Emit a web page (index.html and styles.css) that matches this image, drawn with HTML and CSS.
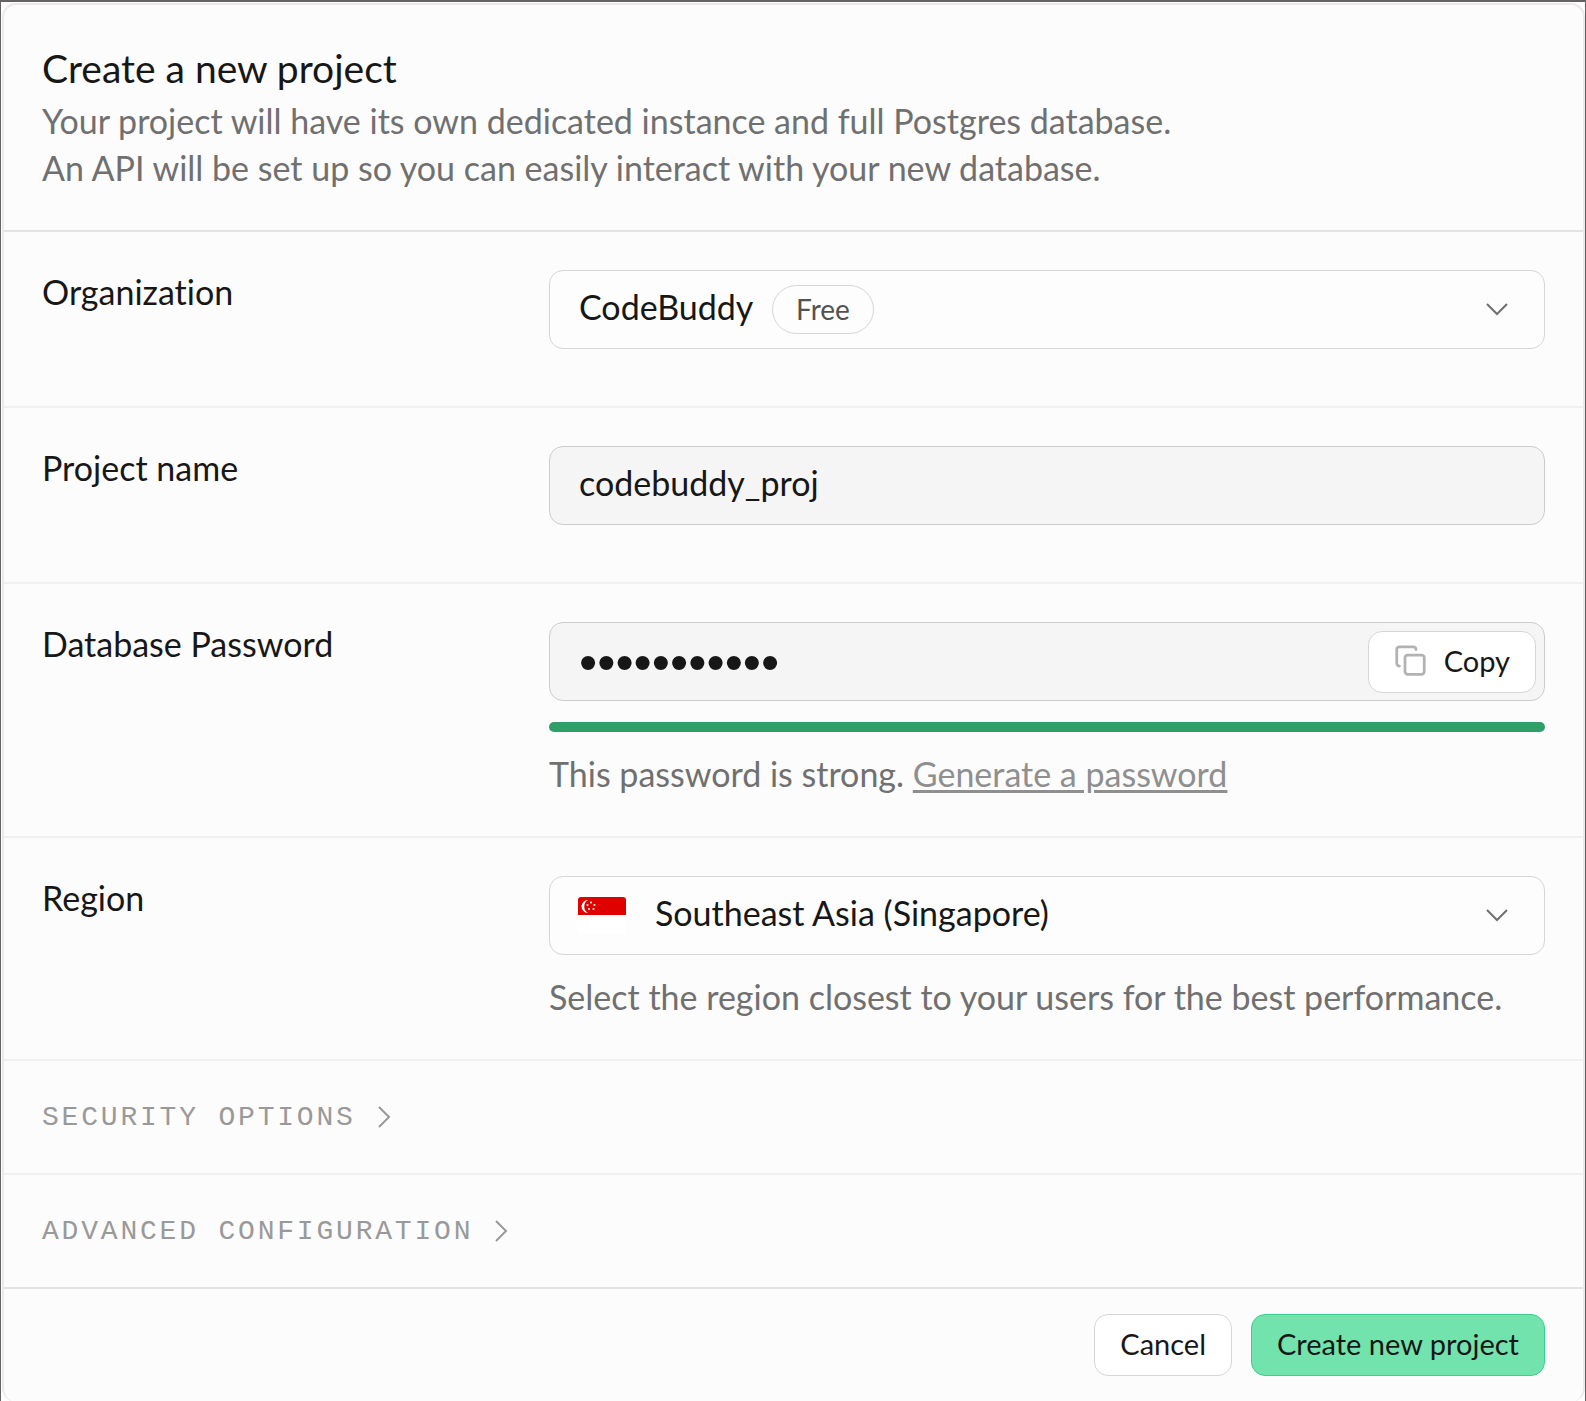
FILE: index.html
```html
<!DOCTYPE html>
<html lang="en">
<head>
    <meta charset="UTF-8">
    <meta name="viewport" content="width=device-width, initial-scale=1.0">
    <title>Create a new project</title>
    <link rel="stylesheet" href="styles.css">
</head>
<body>
    <main class="page">
        <form class="card">
            <header class="card-header">
                <h1>Create a new project</h1>
                <p>Your project will have its own dedicated instance and full Postgres database.<br>An API will be set up so you can easily interact with your new database.</p>
            </header>

            <div class="row row-single">
                <label for="organization">Organization</label>
                <div class="field">
                    <div class="select-wrap">
                        <select class="control" id="organization">
                            <option>CodeBuddy</option>
                        </select>
                        <span class="badge">Free</span>
                        <svg class="chevron" viewBox="0 0 24 24"><path d="M2 7l10 10L22 7"/></svg>
                    </div>
                </div>
            </div>

            <div class="row row-single">
                <label for="project-name">Project name</label>
                <div class="field">
                    <input class="control filled" type="text" id="project-name" value="codebuddy_proj">
                </div>
            </div>

            <div class="row">
                <label for="db-password">Database Password</label>
                <div class="field">
                    <div class="control filled password-box">
                        <input type="password" id="db-password" value="codebuddy12">
                        <button type="button" class="btn copy-btn">
                            <svg class="copy-icon" viewBox="0 0 24 24"><rect x="8" y="8" width="14" height="14" rx="2"/><path d="M4 16c-1.100 0-2-.9-2-2V4c0-1.100.9-2 2-2h10c1.100 0 2 .9 2 2"/></svg>
                            Copy
                        </button>
                    </div>
                    <div class="strength"></div>
                    <p class="hint">This password is strong. <a href="#">Generate a password</a></p>
                </div>
            </div>

            <div class="row">
                <label for="region">Region</label>
                <div class="field">
                    <div class="select-wrap">
                        <select class="control with-flag" id="region">
                            <option>Southeast Asia (Singapore)</option>
                        </select>
                        <svg class="flag" viewBox="0 0 48 36">
                            <rect width="48" height="36" rx="3" fill="#fff"/>
                            <path d="M0 18V3a3 3 0 0 1 3-3h42a3 3 0 0 1 3 3v15z" fill="#df0000"/>
                            <path d="M10 3a6.500 6.500 0 1 0 0 13a7.500 7.500 0 0 1 0-13z" fill="#fff"/>
                            <g fill="#fff">
                                <circle cx="13" cy="5.500" r="1"/>
                                <circle cx="9.500" cy="8" r="1"/>
                                <circle cx="16.500" cy="8" r="1"/>
                                <circle cx="11" cy="12" r="1"/>
                                <circle cx="15.500" cy="12" r="1"/>
                            </g>
                        </svg>
                        <svg class="chevron" viewBox="0 0 24 24"><path d="M2 7l10 10L22 7"/></svg>
                    </div>
                    <p class="hint">Select the region closest to your users for the best performance.</p>
                </div>
            </div>

            <button type="button" class="toggle">
                Security options
                <svg viewBox="0 0 24 24"><path d="M7 2l10 10L7 22"/></svg>
            </button>
            <button type="button" class="toggle">
                Advanced Configuration
                <svg viewBox="0 0 24 24"><path d="M7 2l10 10L7 22"/></svg>
            </button>

            <footer class="card-footer">
                <button type="button" class="btn">Cancel</button>
                <button type="submit" class="btn btn-primary">Create new project</button>
            </footer>
        </form>
    </main>
</body>
</html>
```
FILE: styles.css
```css
* {
    box-sizing: border-box;
}
body {
    margin: 0;
    padding: 2px 1px 0;
    background: #656263;
    color: #171717;
    font-family: Lato, sans-serif;
    font-size: 34px;
    font-variant-ligatures: none;
    line-height: 47px;
}
h1, p {
    margin: 0;
    font-size: inherit;
    font-weight: normal;
}
button, input, select {
    font: inherit;
    color: inherit;
}
.page {
    padding: 1px 0 0 1px;
    background: #fff;
}
.card {
    background: #fcfcfc;
    border: 2px solid #ebe9e9;
    border-bottom: 0;
    border-radius: 14px;
}
.card-header {
    padding: 40px 38px 39px;
    border-bottom: 2px solid #e3e3e3;
    color: #707070;
}
.card-header h1 {
    margin-bottom: 5px;
    color: #171717;
    font-size: 39px;
}

/* form rows */
.row {
    display: grid;
    grid-template-columns: repeat(3, 1fr);
    column-gap: 18px;
    padding: 36px 38px 38px;
    border-bottom: 2px solid #f0f0f0;
}
.row-single {
    padding-bottom: 57px;
}
.field {
    grid-column: span 2;
    padding-top: 2px;
}
.control {
    display: block;
    width: 100%;
    height: 79px;
    padding: 0 29px 6px;
    border: 1px solid #d6d6d6;
    border-radius: 14px;
    background: #fdfdfd;
    appearance: none;
}
.filled {
    border-color: #cccccc;
    background: #f5f5f5;
}
.select-wrap {
    position: relative;
}
.with-flag {
    padding-left: 105px;
}
.badge, .flag, .chevron {
    position: absolute;
    pointer-events: none;
}
.badge {
    left: 223px;
    top: 15px;
    padding: 0 23px;
    border: 1px solid #d6d6d6;
    border-radius: 25px;
    color: #525252;
    font-size: 28px;
}
.flag {
    left: 29px;
    top: 21px;
    width: 48px;
    height: 36px;
}
.chevron {
    right: 36px;
    top: 27px;
    width: 24px;
    height: 24px;
    fill: none;
    stroke: #707070;
    stroke-width: 2;
}
.password-box {
    display: flex;
    align-items: center;
    padding: 0 8px 0 29px;
}
.password-box input {
    flex: 1;
    min-width: 0;
    padding: 0;
    border: 0;
    background: none;
    font-family: "Liberation Sans", sans-serif;
    font-size: 52px;
}
.strength {
    height: 10px;
    margin-top: 21px;
    border-radius: 5px;
    background: #2f9e69;
}
.hint {
    margin-top: 18px;
    margin-bottom: 1px;
    color: #707070;
}
.hint a {
    color: #8f8f8f;
    text-underline-offset: 3px;
}

/* buttons */
.btn {
    display: flex;
    align-items: center;
    height: 62px;
    padding: 0 25px 4px;
    border: 1px solid #d6d6d6;
    border-radius: 14px;
    background: #fff;
    font-size: 29px;
    cursor: pointer;
}
.btn-primary {
    border-color: #3ecf8e;
    background: #72e3ad;
}
.copy-btn {
    padding-bottom: 2px;
}
.copy-icon {
    width: 33px;
    height: 33px;
    margin-right: 17px;
    fill: none;
    stroke: #b2b2b2;
    stroke-width: 2;
    stroke-linecap: round;
}
.toggle {
    display: flex;
    align-items: center;
    gap: 16px;
    width: 100%;
    height: 114px;
    padding: 0 38px;
    border: 0;
    border-bottom: 2px solid #f0f0f0;
    background: none;
    color: #999999;
    font-family: "Liberation Mono", monospace;
    font-size: 28px;
    letter-spacing: 0.1em;
    text-transform: uppercase;
    cursor: pointer;
}
.toggle svg {
    width: 24px;
    height: 24px;
    fill: none;
    stroke: #999999;
    stroke-width: 2;
}
.card-footer {
    display: flex;
    justify-content: flex-end;
    gap: 19px;
    margin-top: -2px;
    padding: 25px 38px 26px;
    border-top: 2px solid #e3e3e3;
}
```
